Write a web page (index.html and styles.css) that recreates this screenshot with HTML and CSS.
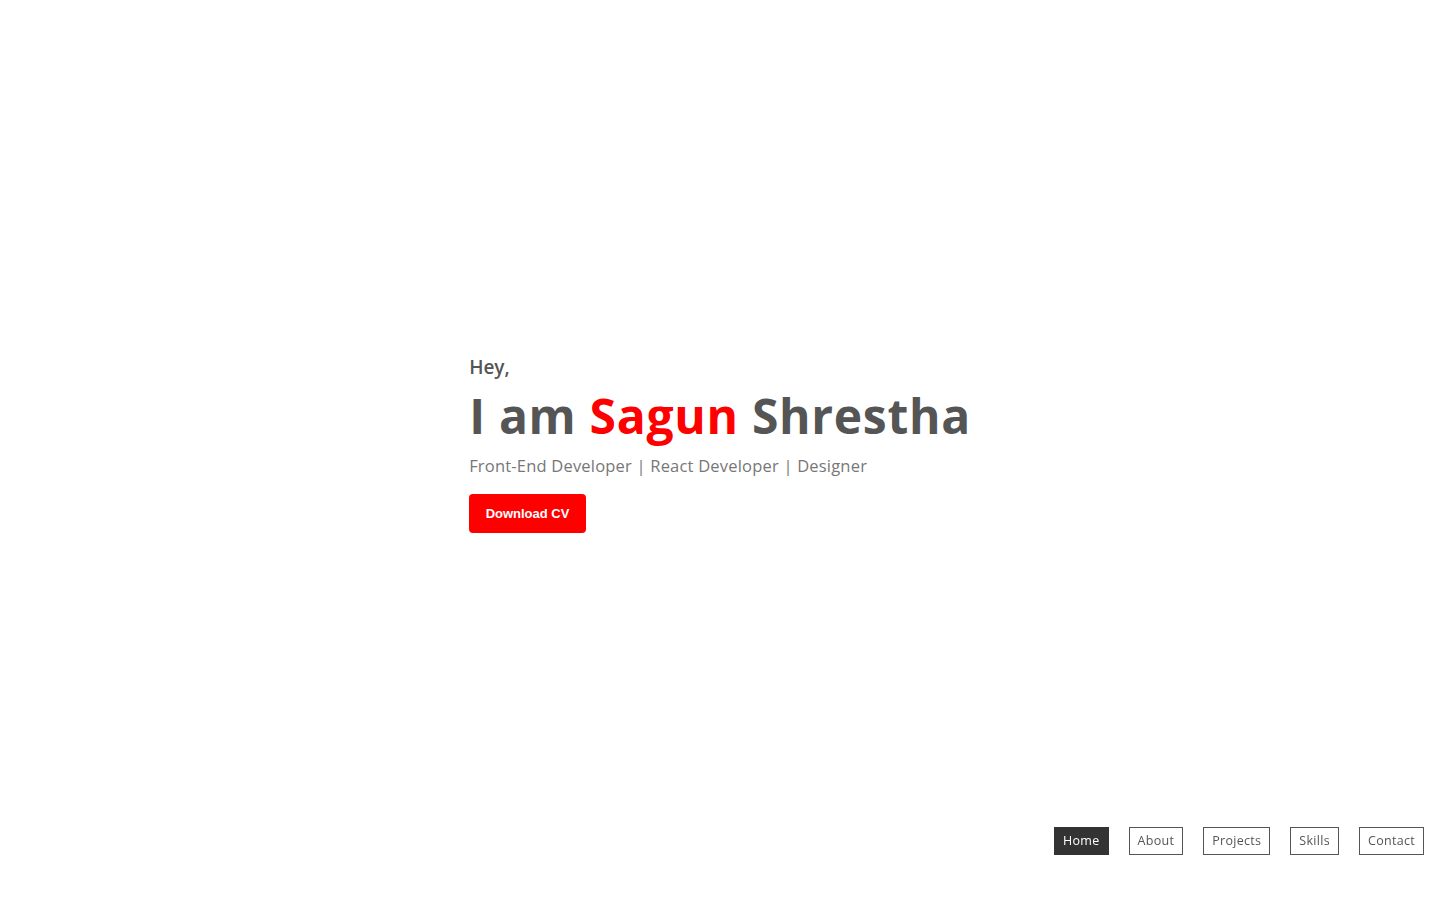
FILE: index.html
```html
<!DOCTYPE html>
<html lang="en">
<head>
<meta charset="utf-8">
<title>Sagun Shrestha</title>
<link rel="stylesheet" href="styles.css">
</head>
<body>
<main class="hero">
  <div class="intro">
    <p class="hey">Hey,</p>
    <h1 class="title">I am <span class="accent">Sagun</span> Shrestha</h1>
    <p class="role">Front-End Developer | React Developer | Designer</p>
    <a class="cv" href="#">Download CV</a>
  </div>
</main>
<nav class="nav">
  <a class="nav-item active" href="#">Home</a>
  <a class="nav-item" href="#">About</a>
  <a class="nav-item" href="#">Projects</a>
  <a class="nav-item" href="#">Skills</a>
  <a class="nav-item" href="#">Contact</a>
</nav>
</body>
</html>
```
FILE: styles.css
```css
* { box-sizing: border-box; }
html, body { margin: 0; padding: 0; }
body {
  background: #fff;
  color: #555;
  font-family: "Open Sans", "DejaVu Sans", sans-serif;
  height: 900px;
  overflow: hidden;
}
.hero {
  height: 900px;
  padding-bottom: 13px;
  display: flex;
  align-items: center;
  justify-content: center;
}
.intro {
  display: flex;
  flex-direction: column;
  align-items: flex-start;
}
.hey {
  margin: 0;
  font-size: 19px;
  font-weight: 600;
  color: #555;
  line-height: 24px;
}
.title {
  margin: 5px 0 0;
  font-size: 48px;
  font-weight: 700;
  letter-spacing: 0.7px;
  line-height: 64px;
  color: #555;
}
.accent { color: #ff0000; }
.role {
  margin: 6px 0 0;
  font-size: 16.5px;
  letter-spacing: 0.2px;
  color: #777;
  line-height: 24px;
}
.cv {
  margin-top: 16px;
  display: inline-block;
  background: #ff0000;
  color: #fff;
  text-decoration: none;
  font-family: "Liberation Sans", Arial, sans-serif;
  font-weight: 700;
  font-size: 13px;
  line-height: 15px;
  padding: 12px 16.5px;
  border-radius: 4px;
}
.nav {
  position: fixed;
  right: 16px;
  bottom: 45px;
  display: flex;
  gap: 20px;
}
.nav-item {
  display: inline-block;
  border: 1px solid #555;
  color: #555;
  text-decoration: none;
  font-size: 12.5px;
  letter-spacing: 0.3px;
  line-height: 18px;
  padding: 4px 8px;
  background: #fff;
}
.nav-item.active {
  background: #333;
  color: #fff;
  border-color: #333;
}
```
